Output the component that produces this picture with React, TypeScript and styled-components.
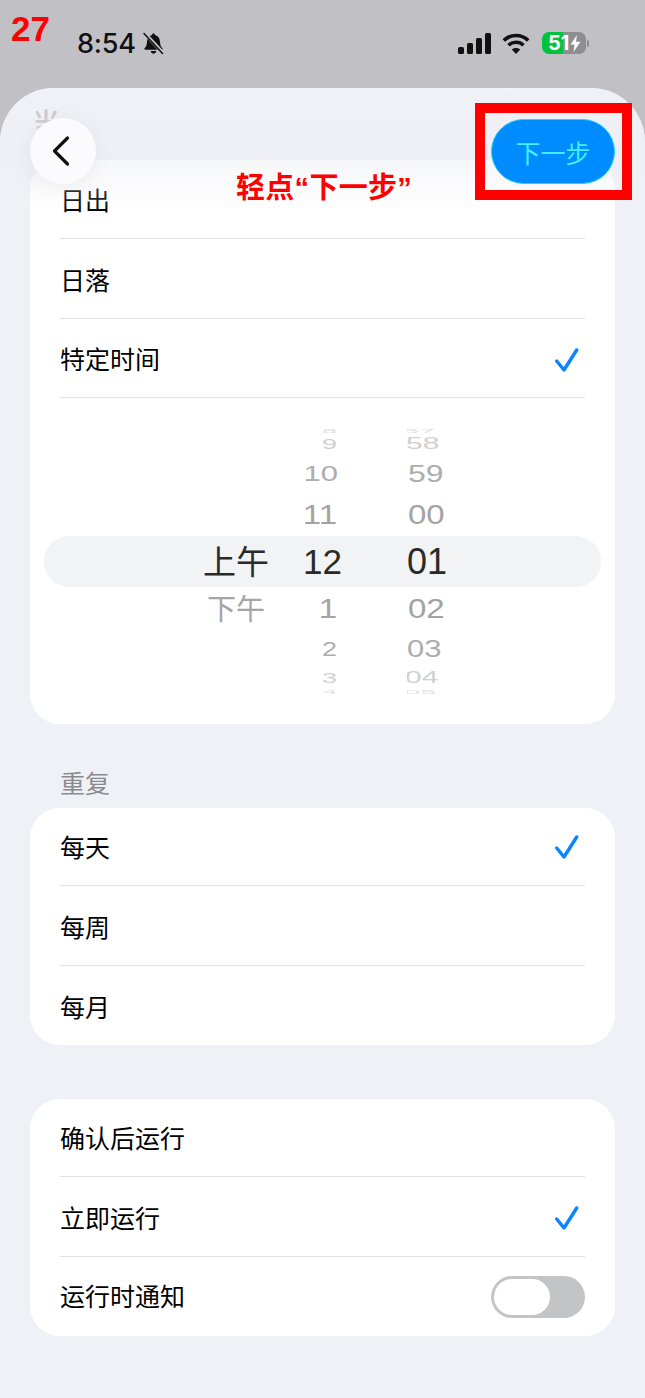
import React from 'react';
import styled, { createGlobalStyle } from 'styled-components';

const GlobalStyle = createGlobalStyle`
  html, body {
    margin: 0;
    padding: 0;
    background: #f0f1f6;
  }
  * {
    box-sizing: border-box;
  }
`;

const CJK = `"Noto Sans CJK SC", "Noto Sans", sans-serif`;

const Screen = styled.div`
  position: relative;
  width: 645px;
  height: 1398px;
  display: flex;
  flex-direction: column;
  background: #c1c0c5;
  overflow: hidden;
  font-family: ${CJK};
  color: #000;
`;

const StatusBar = styled.div`
  height: 88px;
  flex: none;
  display: flex;
  align-items: flex-start;
  padding: 26px 56px 0 77px;
`;

const Time = styled.span`
  font-family: Inter, sans-serif;
  font-size: 27px;
  line-height: 36px;
  font-weight: 500;
  letter-spacing: -0.2px;
  color: #111;
`;

const BellIcon = styled.svg`
  width: 23px;
  height: 23px;
  margin: 6px 0 0 6px;
`;

const StatusRight = styled.div`
  margin-left: auto;
  display: flex;
  align-items: center;
  height: 34px;
`;

const WifiIcon = styled.svg`
  width: 28px;
  height: 21px;
  margin: 0 12px 0 11px;
`;

const Battery = styled.div`
  width: 44px;
  height: 22px;
  border-radius: 7px;
  overflow: hidden;
  background: linear-gradient(90deg, #00c23e 0 21px, #8e8e90 21px);
  font-family: Inter, sans-serif;
  font-size: 20px;
  font-weight: 700;
  line-height: 22px;
  color: #fff;
  display: flex;
  align-items: center;
  padding-left: 6px;
  gap: 1px;
`;

const BatteryNub = styled.span`
  width: 2px;
  height: 7px;
  margin-left: 1px;
  border-radius: 0 2px 2px 0;
  background: #8e8e90;
`;

const Sheet = styled.div`
  position: relative;
  flex: 1;
  display: flex;
  flex-direction: column;
  padding: 15px 30px 0;
  background: #f0f1f6;
  border-radius: 54px 54px 0 0;
  box-shadow: inset 0 1px 0 rgba(255, 255, 255, 0.3);
  overflow: hidden;
`;

const Title = styled.div`
  height: 57px;
  padding: 3px 0 0 2px;
  font-size: 28px;
  line-height: 32px;
  font-weight: 500;
  color: #bdbdc1;
`;

const Card = styled.div`
  background: #fff;
  border-radius: 30px;
  overflow: hidden;
`;

const Row = styled.div<{ $height?: number; $lift?: number }>`
  height: ${(p) => p.$height ?? 80}px;
  margin: 0 30px;
  display: flex;
  align-items: center;
  justify-content: space-between;
  font-size: 25px;
  line-height: 32px;
  padding-bottom: ${(p) => p.$lift ?? 0}px;
  &:not(:last-child) {
    border-bottom: 1px solid #e3e3e5;
  }
`;

const Wheel = styled.div`
  position: relative;
  height: 326px;
  padding-top: 30px;
  display: flex;
`;

const WheelBand = styled.div`
  position: absolute;
  left: 14px;
  right: 14px;
  top: 138px;
  height: 51px;
  border-radius: 25px;
  background: #f2f3f5;
`;

const WheelColumn = styled.div<{ $width: number; $align: string; $gap?: number }>`
  position: relative;
  width: ${(p) => p.$width}px;
  margin-left: ${(p) => p.$gap ?? 0}px;
  height: 266px;
  overflow: hidden;
  text-align: ${(p) => p.$align};
`;

const WheelItem = styled.div<{ $height: number; $size: number; $squash: number; $color: string; $shift: number }>`
  height: ${(p) => p.$height}px;
  font-family: 'Liberation Sans', sans-serif;
  font-size: ${(p) => p.$size}px;
  line-height: ${(p) => p.$height}px;
  color: ${(p) => p.$color};
  transform: translateX(${(p) => p.$shift}px) scaleY(${(p) => p.$squash});
  white-space: nowrap;
`;

const MeridiemSpacer = styled.div`
  height: 108px;
`;

const Meridiem = styled.div<{ $selected?: boolean }>`
  height: ${(p) => (p.$selected ? 48 : 43)}px;
  padding-right: ${(p) => (p.$selected ? 0 : 4)}px;
  font-size: ${(p) => (p.$selected ? 33 : 29)}px;
  line-height: ${(p) => (p.$selected ? 48 : 47)}px;
  color: ${(p) => (p.$selected ? '#2a2a2a' : '#a5a5a5')};
`;

const SectionLabel = styled.div`
  margin: 41px 0 0 30px;
  height: 43px;
  font-size: 25px;
  line-height: 34px;
  color: #8a8a8e;
`;

const BottomCard = styled(Card)`
  margin-top: 54px;
`;

const CheckIcon = styled.svg`
  width: 26px;
  height: 26px;
  margin: 5px 5px 0 0;
  flex: none;
`;

const Toggle = styled.div`
  width: 94px;
  height: 42px;
  flex: none;
  margin-top: 4px;
  padding: 3px;
  border-radius: 21px;
  background: #c3c4c6;
`;

const ToggleKnob = styled.div`
  width: 56px;
  height: 36px;
  border-radius: 18px;
  background: #fff;
`;

/* everything below floats over the scrolled content */
const HeaderFade = styled.div`
  position: absolute;
  left: 0;
  right: 0;
  top: 0;
  height: 125px;
  background: linear-gradient(
    180deg,
    rgba(238, 239, 244, 0) 0,
    rgba(238, 239, 244, 0.5) 45px,
    rgba(238, 239, 244, 0.5) 72px,
    rgba(238, 239, 244, 0) 125px
  );
`;

const BackButton = styled.div`
  position: absolute;
  left: 30px;
  top: 30px;
  width: 66px;
  height: 66px;
  padding-right: 5px;
  border-radius: 50%;
  background: #fbfbfd;
  box-shadow: 0 4px 22px rgba(0, 0, 0, 0.06);
  display: flex;
  align-items: center;
  justify-content: center;
`;

const NextButton = styled.div`
  position: absolute;
  right: 30px;
  top: 31px;
  width: 124px;
  height: 65px;
  border-radius: 33px;
  background: #008cff;
  border: 1px solid #22d3f5;
  color: #3ff0ff;
  font-size: 25px;
  display: flex;
  align-items: center;
  justify-content: center;
`;

const StepNumber = styled.div`
  position: absolute;
  left: 11px;
  top: 8px;
  font-family: 'Liberation Sans', sans-serif;
  font-size: 35px;
  line-height: 42px;
  font-weight: 700;
  color: #f00;
`;

const Hint = styled.div`
  position: absolute;
  left: 236px;
  top: 168px;
  font-family: 'Liberation Sans', ${CJK};
  font-size: 29px;
  line-height: 40px;
  font-weight: 700;
  letter-spacing: 0.3px;
  color: #f00;
`;

const Highlight = styled.div`
  position: absolute;
  left: 475px;
  top: 103px;
  width: 157px;
  height: 97px;
  border: 10px solid #f00;
`;

const heights = [6, 20, 40, 42, 51, 43, 38, 20, 8];
const squash = [0.2, 0.52, 0.72, 0.85, 1, 0.85, 0.78, 0.52, 0.2];
const greys = ['#e2e2e2', '#cfcfcf', '#adadad', '#a3a3a3', '#2a2a2a', '#a3a3a3', '#adadad', '#d0d0d0', '#e2e2e2'];

const hours = ['8', '9', '10', '11', '12', '1', '2', '3', '4'];
const hourSizes = [27, 27, 31, 33, 35, 33, 27, 27, 27];
const hourShift = [-6, -6, -5, -6, -1, -6, -6, -6, -6];
const minutes = ['57', '58', '59', '00', '01', '02', '03', '04', '05'];
const minuteSizes = [29, 30, 32, 33, 36, 33, 31, 30, 29];
const minuteShift = [-4, -1, 1, 1, 0, 1, 0, -2, -3];

const Check = () => (
  <CheckIcon viewBox="0 0 26 26" fill="none">
    <path d="M2.700 13 L10 22 L22.700 2" stroke="#0a84ff" strokeWidth="3.400" strokeLinecap="round" strokeLinejoin="round" />
  </CheckIcon>
);

const App = () => (
  <Screen>
    <GlobalStyle />
    <StatusBar>
      <Time>8:54</Time>
      <BellIcon viewBox="0 0 23 23">
        <path d="M11.500 1.500c-.9 0-1.500.6-1.600 1.500C6.800 3.800 5.200 6.400 5 9.700c-.2 3.300-.8 5-2.400 6.600-.6.600-.2 1.500.6 1.500h16.600c.8 0 1.200-.9.600-1.500-1.600-1.600-2.200-3.300-2.400-6.600-.2-3.300-1.800-5.900-4.900-6.700-.1-.9-.7-1.500-1.600-1.500zM8.600 19c.2 1.500 1.400 2.600 2.900 2.600s2.700-1.100 2.900-2.600z" fill="#111" />
        <path d="M3 1.500 L21 21" stroke="#c1c0c5" strokeWidth="3.400" />
        <path d="M2 1.500 L20.500 21.500" stroke="#111" strokeWidth="1.500" strokeLinecap="round" />
      </BellIcon>
      <StatusRight>
        <svg width="33" height="21" viewBox="0 0 33 21" fill="#111">
          <rect x="0" y="14" width="6" height="7" rx="1.500" />
          <rect x="9" y="10" width="6" height="11" rx="1.500" />
          <rect x="18" y="5" width="6" height="16" rx="1.500" />
          <rect x="27" y="0" width="6" height="21" rx="1.500" />
        </svg>
        <WifiIcon viewBox="0 0 28 21" fill="none" stroke="#111" strokeWidth="3.600">
          <path d="M1.800 7.500 C8.500 .800 19.500 .800 26.200 7.500" />
          <path d="M6.500 12.200 C10.700 8.300 17.300 8.300 21.500 12.200" />
          <path d="M14 21 L9.800 16.500 C12.200 14.500 15.800 14.500 18.200 16.500 Z" fill="#111" stroke="none" />
        </WifiIcon>
        <Battery>
          51
          <svg width="11" height="17" viewBox="0 0 11 17">
            <path d="M7 0 L0.500 9.500 H4.500 L3.500 17 L10.500 6.800 H6 Z" fill="#fff" />
          </svg>
        </Battery>
        <BatteryNub />
      </StatusRight>
    </StatusBar>

    <Sheet>
      <Title>当</Title>
      <Card>
        <Row $height={79}>日出</Row>
        <Row>日落</Row>
        <Row $height={79}>
          特定时间
          <Check />
        </Row>
        <Wheel>
          <WheelBand />
          <WheelColumn $width={239} $align="right">
            <MeridiemSpacer />
            <Meridiem $selected>上午</Meridiem>
            <Meridiem>下午</Meridiem>
          </WheelColumn>
          <WheelColumn $width={74} $align="right">
            {hours.map((h, i) => (
              <WheelItem key={h} $height={heights[i]} $size={hourSizes[i]} $squash={squash[i]} $color={greys[i]} $shift={hourShift[i]}>
                {h}
              </WheelItem>
            ))}
          </WheelColumn>
          <WheelColumn $width={60} $align="left" $gap={64}>
            {minutes.map((m, i) => (
              <WheelItem key={m} $height={heights[i]} $size={minuteSizes[i]} $squash={squash[i]} $color={greys[i]} $shift={minuteShift[i]}>
                {m}
              </WheelItem>
            ))}
          </WheelColumn>
        </Wheel>
      </Card>

      <SectionLabel>重复</SectionLabel>
      <Card>
        <Row $height={78} $lift={2}>
          每天
          <Check />
        </Row>
        <Row>每周</Row>
        <Row $height={79}>每月</Row>
      </Card>

      <BottomCard>
        <Row $height={78} $lift={2}>
          确认后运行
        </Row>
        <Row>
          立即运行
          <Check />
        </Row>
        <Row $height={79} $lift={3}>
          运行时通知
          <Toggle>
            <ToggleKnob />
          </Toggle>
        </Row>
      </BottomCard>

      <HeaderFade />
      <BackButton>
        <svg width="22" height="32" viewBox="0 0 22 32" fill="none">
          <path d="M17.500 3 L4.500 16 L17.500 29" stroke="#111" strokeWidth="3.200" strokeLinecap="round" strokeLinejoin="round" />
        </svg>
      </BackButton>
      <NextButton>下一步</NextButton>
    </Sheet>

    <StepNumber>27</StepNumber>
    <Hint>轻点“下一步”</Hint>
    <Highlight />
  </Screen>
);

export default App;
